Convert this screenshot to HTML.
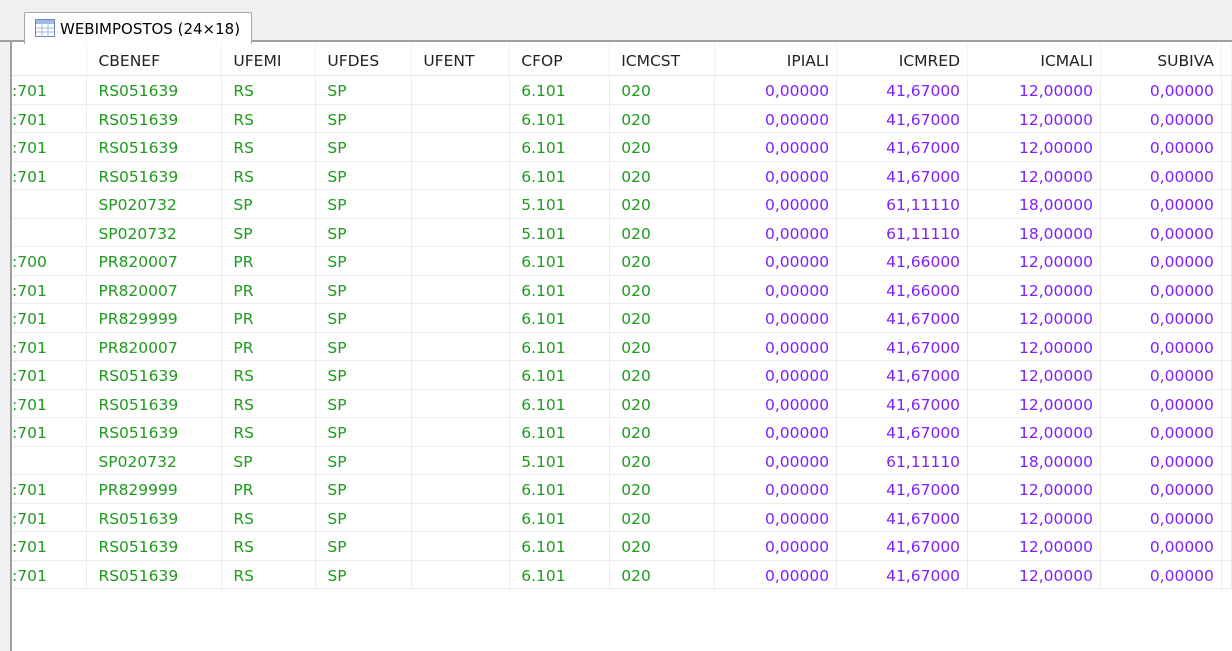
<!DOCTYPE html>
<html><head><meta charset="utf-8"><style>
body{margin:0;width:1232px;height:651px;background:#fff;position:relative;overflow:hidden;font-family:Tahoma,"DejaVu Sans","Liberation Sans",sans-serif;font-size:15.5px}
.top{position:absolute;left:0;top:0;width:1232px;height:42px;background:#f0f0f0;border-bottom:2px solid #a0a0a0;box-sizing:border-box}
.lstrip{position:absolute;left:0;top:42px;width:10px;height:609px;background:#f0f0f0;border-right:2px solid #a0a0a0}
.tab{position:absolute;left:24px;top:12px;width:226px;height:31px;background:#fff;border:1px solid #a8a8a8;border-bottom:none;border-radius:2px 2px 0 0;font-size:15px;color:#000}
.tab span{position:absolute;left:35px;top:7px}
.tab svg{position:absolute;left:10px;top:6px}
table{position:absolute;left:12px;top:43px;border-collapse:collapse;table-layout:fixed}
td{padding:3px 0 0 0;white-space:nowrap;overflow:hidden;border-bottom:1px solid #ececec;border-right:1px solid #ececec;height:24.5px}
tr.h td{height:29px;color:#222;border-bottom:1px solid #e8e8e8;border-right:1px solid #f2f2f2}
td.l{padding-left:11px}td.r{text-align:right;padding-right:7px}
.g td{color:#1f9a1f}.g td.r{color:#7f1fff}
td.f{padding-left:0}
</style></head><body>
<div class="top"></div>
<div class="lstrip"></div>
<div class="tab"><svg width="20" height="18"><rect x="0.5" y="0.5" width="19" height="17" fill="#fff" stroke="#6b8bbd"/><rect x="1" y="1" width="18" height="4" fill="#9fb9e0"/><g stroke="#9fb9e0"><line x1="1" y1="9" x2="19" y2="9"/><line x1="1" y1="13" x2="19" y2="13"/><line x1="7" y1="5" x2="7" y2="18"/><line x1="13" y1="5" x2="13" y2="18"/></g></svg><span>WEBIMPOSTOS (24×18)</span></div>
<table>
<colgroup><col style="width:75px"><col style="width:135px"><col style="width:94px"><col style="width:96px"><col style="width:98px"><col style="width:100px"><col style="width:105px"><col style="width:122px"><col style="width:131px"><col style="width:133px"><col style="width:121px"><col style="width:10px"></colgroup>
<tr class="h"><td></td><td class="l">CBENEF</td><td class="l">UFEMI</td><td class="l">UFDES</td><td class="l">UFENT</td><td class="l">CFOP</td><td class="l">ICMCST</td><td class="r">IPIALI</td><td class="r">ICMRED</td><td class="r">ICMALI</td><td class="r">SUBIVA</td><td></td></tr>
<tr class="g"><td class="f">:701</td><td class="l">RS051639</td><td class="l">RS</td><td class="l">SP</td><td></td><td class="l">6.101</td><td class="l">020</td><td class="r">0,00000</td><td class="r">41,67000</td><td class="r">12,00000</td><td class="r">0,00000</td><td></td></tr>
<tr class="g"><td class="f">:701</td><td class="l">RS051639</td><td class="l">RS</td><td class="l">SP</td><td></td><td class="l">6.101</td><td class="l">020</td><td class="r">0,00000</td><td class="r">41,67000</td><td class="r">12,00000</td><td class="r">0,00000</td><td></td></tr>
<tr class="g"><td class="f">:701</td><td class="l">RS051639</td><td class="l">RS</td><td class="l">SP</td><td></td><td class="l">6.101</td><td class="l">020</td><td class="r">0,00000</td><td class="r">41,67000</td><td class="r">12,00000</td><td class="r">0,00000</td><td></td></tr>
<tr class="g"><td class="f">:701</td><td class="l">RS051639</td><td class="l">RS</td><td class="l">SP</td><td></td><td class="l">6.101</td><td class="l">020</td><td class="r">0,00000</td><td class="r">41,67000</td><td class="r">12,00000</td><td class="r">0,00000</td><td></td></tr>
<tr class="g"><td class="f"></td><td class="l">SP020732</td><td class="l">SP</td><td class="l">SP</td><td></td><td class="l">5.101</td><td class="l">020</td><td class="r">0,00000</td><td class="r">61,11110</td><td class="r">18,00000</td><td class="r">0,00000</td><td></td></tr>
<tr class="g"><td class="f"></td><td class="l">SP020732</td><td class="l">SP</td><td class="l">SP</td><td></td><td class="l">5.101</td><td class="l">020</td><td class="r">0,00000</td><td class="r">61,11110</td><td class="r">18,00000</td><td class="r">0,00000</td><td></td></tr>
<tr class="g"><td class="f">:700</td><td class="l">PR820007</td><td class="l">PR</td><td class="l">SP</td><td></td><td class="l">6.101</td><td class="l">020</td><td class="r">0,00000</td><td class="r">41,66000</td><td class="r">12,00000</td><td class="r">0,00000</td><td></td></tr>
<tr class="g"><td class="f">:701</td><td class="l">PR820007</td><td class="l">PR</td><td class="l">SP</td><td></td><td class="l">6.101</td><td class="l">020</td><td class="r">0,00000</td><td class="r">41,66000</td><td class="r">12,00000</td><td class="r">0,00000</td><td></td></tr>
<tr class="g"><td class="f">:701</td><td class="l">PR829999</td><td class="l">PR</td><td class="l">SP</td><td></td><td class="l">6.101</td><td class="l">020</td><td class="r">0,00000</td><td class="r">41,67000</td><td class="r">12,00000</td><td class="r">0,00000</td><td></td></tr>
<tr class="g"><td class="f">:701</td><td class="l">PR820007</td><td class="l">PR</td><td class="l">SP</td><td></td><td class="l">6.101</td><td class="l">020</td><td class="r">0,00000</td><td class="r">41,67000</td><td class="r">12,00000</td><td class="r">0,00000</td><td></td></tr>
<tr class="g"><td class="f">:701</td><td class="l">RS051639</td><td class="l">RS</td><td class="l">SP</td><td></td><td class="l">6.101</td><td class="l">020</td><td class="r">0,00000</td><td class="r">41,67000</td><td class="r">12,00000</td><td class="r">0,00000</td><td></td></tr>
<tr class="g"><td class="f">:701</td><td class="l">RS051639</td><td class="l">RS</td><td class="l">SP</td><td></td><td class="l">6.101</td><td class="l">020</td><td class="r">0,00000</td><td class="r">41,67000</td><td class="r">12,00000</td><td class="r">0,00000</td><td></td></tr>
<tr class="g"><td class="f">:701</td><td class="l">RS051639</td><td class="l">RS</td><td class="l">SP</td><td></td><td class="l">6.101</td><td class="l">020</td><td class="r">0,00000</td><td class="r">41,67000</td><td class="r">12,00000</td><td class="r">0,00000</td><td></td></tr>
<tr class="g"><td class="f"></td><td class="l">SP020732</td><td class="l">SP</td><td class="l">SP</td><td></td><td class="l">5.101</td><td class="l">020</td><td class="r">0,00000</td><td class="r">61,11110</td><td class="r">18,00000</td><td class="r">0,00000</td><td></td></tr>
<tr class="g"><td class="f">:701</td><td class="l">PR829999</td><td class="l">PR</td><td class="l">SP</td><td></td><td class="l">6.101</td><td class="l">020</td><td class="r">0,00000</td><td class="r">41,67000</td><td class="r">12,00000</td><td class="r">0,00000</td><td></td></tr>
<tr class="g"><td class="f">:701</td><td class="l">RS051639</td><td class="l">RS</td><td class="l">SP</td><td></td><td class="l">6.101</td><td class="l">020</td><td class="r">0,00000</td><td class="r">41,67000</td><td class="r">12,00000</td><td class="r">0,00000</td><td></td></tr>
<tr class="g"><td class="f">:701</td><td class="l">RS051639</td><td class="l">RS</td><td class="l">SP</td><td></td><td class="l">6.101</td><td class="l">020</td><td class="r">0,00000</td><td class="r">41,67000</td><td class="r">12,00000</td><td class="r">0,00000</td><td></td></tr>
<tr class="g"><td class="f">:701</td><td class="l">RS051639</td><td class="l">RS</td><td class="l">SP</td><td></td><td class="l">6.101</td><td class="l">020</td><td class="r">0,00000</td><td class="r">41,67000</td><td class="r">12,00000</td><td class="r">0,00000</td><td></td></tr>
</table>
</body></html>
